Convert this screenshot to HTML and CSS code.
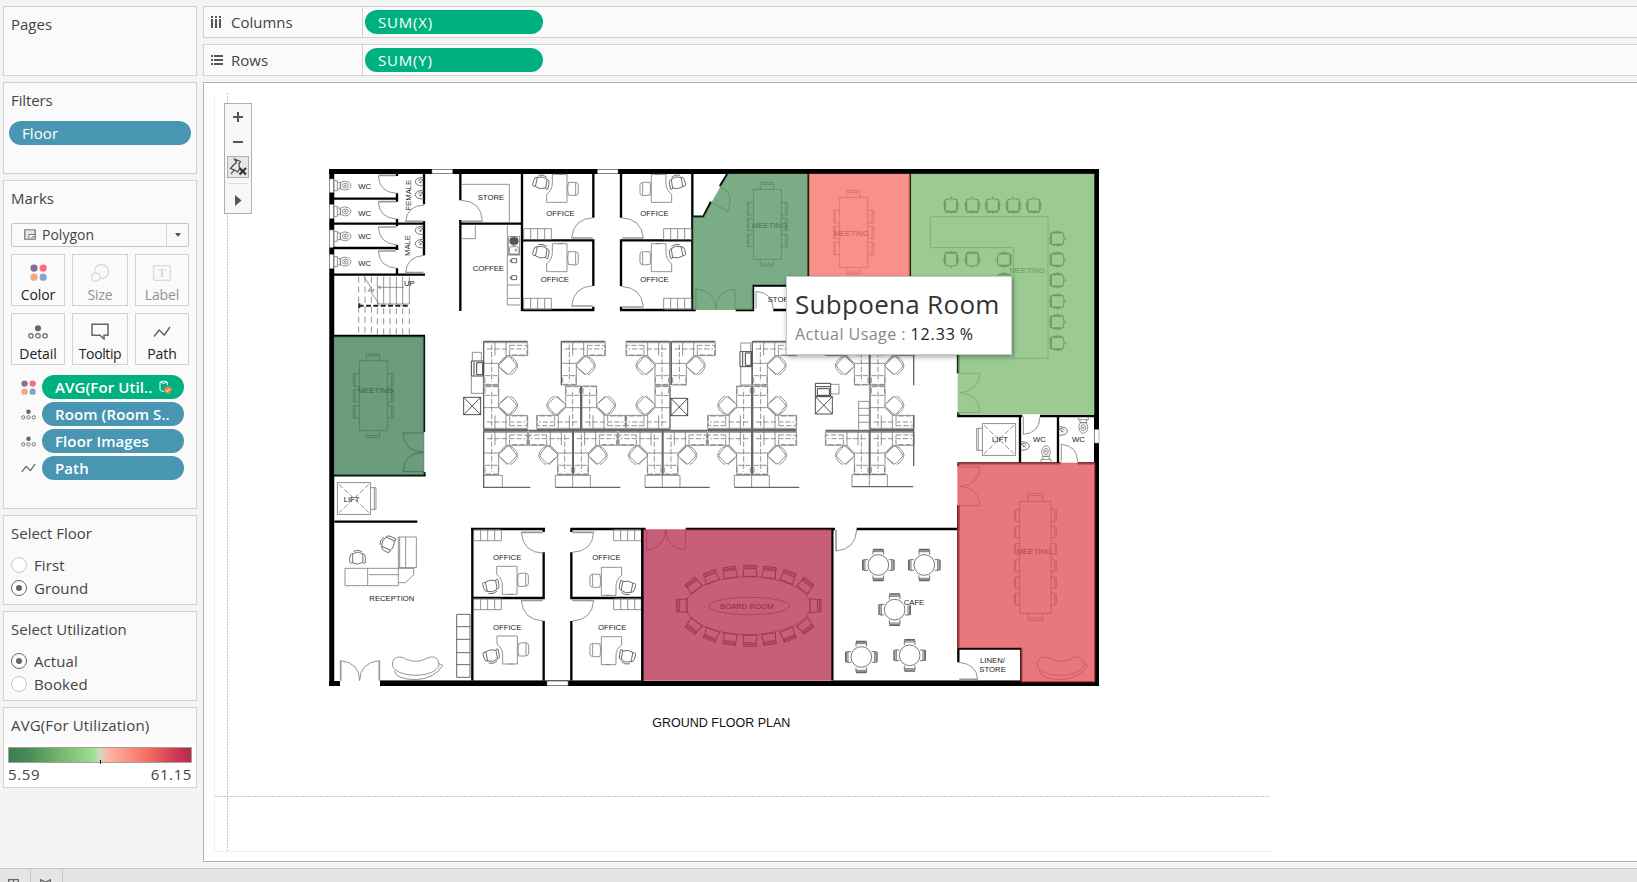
FILE: index.html
```html
<!DOCTYPE html>
<html lang="en">
<head>
<meta charset="utf-8">
<title>Floor utilization</title>
<link rel="stylesheet" href="styles.css">
</head>
<body>
<svg class="defs" width="0" height="0" aria-hidden="true">
  <defs>
    <linearGradient id="usage-ramp">
      <stop offset="0" stop-color="#3c7b54"/><stop offset=".1" stop-color="#458b56"/><stop offset=".28" stop-color="#76b56c"/>
      <stop offset=".46" stop-color="#9edc92"/><stop offset=".5" stop-color="#d2d6c2"/><stop offset=".55" stop-color="#ffb2a5"/>
      <stop offset=".76" stop-color="#f46f62"/><stop offset=".9" stop-color="#d33b54"/><stop offset="1" stop-color="#b52a4b"/>
    </linearGradient>
    <symbol id="i-color" viewBox="0 0 16 16"><circle cx="3.8" cy="3.8" r="3.4" fill="#85709b"/><circle cx="12.4" cy="3.8" r="3.4" fill="#fa6c82"/><circle cx="3.8" cy="12.4" r="3.4" fill="#f6a877"/><circle cx="12.4" cy="12.4" r="3.4" fill="#82a5cd"/></symbol>
    <symbol id="i-detail" viewBox="0 0 20 14"><circle cx="10" cy="3.2" r="3" fill="#666"/><g fill="none" stroke="#666" stroke-width="1.2"><circle cx="3" cy="10.8" r="2.2"/><circle cx="10" cy="10.8" r="2.2"/><circle cx="17" cy="10.8" r="2.2"/></g></symbol>
    <symbol id="i-path" viewBox="0 0 18 12"><path d="M1 10.5 6.2 4 11.3 9 17 1" fill="none" stroke="#666" stroke-width="1.5"/></symbol>

    <g id="desk">
      <path d="M697 73H741V157H680V133Q697 120 697 100Z M716 73h12"/>
      <path d="M745 97H765Q775 98 775 105V129Q775 136 765 137L745 135Q741 117 745 97Z M767 99V136"/>
      <use href="#armchair" transform="translate(664 98) rotate(12)"/>
    </g>
    <g id="armchair" stroke="#555">
      <path d="M-15 -13Q0 -22 15 -13L16 13Q0 22 -15 15Z"/>
      <path d="M-15 -14Q-24 -12 -24 0V13Q-20 18 -15 13 M15 -14Q24 -12 23 0V15Q19 19 16 13 M-13 -20Q0 -27 13 -19"/>
    </g>
    <g id="files"><path d="M0 0H83V33H0ZM21 0V33M42 0V33M63 0V33"/></g>
    <g id="wcpan"><path d="M0 -15H9V15H0M9 -10H18V10H9"/><path d="M18 -9Q30 -17 42 -11Q50 -6 50 0Q50 6 42 11Q30 17 18 9Z"/><ellipse cx="33" cy="0" rx="9" ry="7"/><circle cx="33" cy="0" r="2.5"/></g>
    <g id="basin" stroke="#555"><path d="M15 -13Q-12 -13 -12 0Q-12 13 15 13M-4 -2Q2 -12 12 -6M0 3 12 -6"/><circle cx="4" cy="2" r="1.5"/></g>
    <g id="cubicle">
      <path class="pane" d="M0 0H132M0 0V131"/>
      <path d="M0 4H132V43H67L45 66V131H0M67 0V43M34 0V43M0 66H45"/>
      <path class="dash" d="M10 23H125M24 10V122M78 12H130V41H78ZM4 103H44V129H4Z"/>
      <g transform="translate(74 73)"><path d="M-28 -3 -5 -25Q0 -30 6 -25L23 -4Q26 0 22 5L4 24Q0 28 -5 23L-28 3Q-30 0 -28 -3Z"/><path d="M5 -27Q25 -20 28 1Q24 18 6 28M-24 -8-4 -29M-24 8-3 28"/></g>
    </g>
    <g id="table6">
      <path d="M220 118H304V328H220ZM241 118V98H281V118M245 103H277M241 328V348H281V328M245 342H277"/>
      <path d="M220 157H202V195H220M220 205H202V242H220M220 253H202V290H220M207 157V195M207 205V242M207 253V290M304 157H322V195H304M304 205H322V242H304M304 253H322V290H304M317 157V195M317 205V242M317 253V290"/>
    </g>
    <g id="seat" stroke="#444" stroke-width="3.2"><path d="M-17 -16Q0 -22 17 -16V19H-17ZM-20 -12V15M20 -12V15M-25 0H-18M18 0H25M0 -26V-18M0 19V26M-17 22H17"/></g>
    <g id="boardchair" stroke="#555" stroke-width="2.8"><path d="M-21 17 -18 -6H18L21 17ZM-19 -6V-16H19V-6M-19 -11H19"/></g>
    <g id="cafeset" stroke="#555">
      <circle r="31"/>
      <g id="cafechairs"><path d="M-16 -31V-44H16V-31M-16 -40H16M-16 31V44H16V31M-16 40H16M-31 -16H-44V16H-31M-40 -16V16M31 -16H44V16H31M40 -16V16"/><path class="pane" d="M-16 -47H16M-16 47H16M-47 -16V16M47 -16V16"/></g>
    </g>
    <g id="sofa"><path d="M217 495C217 466 245 468 257 477Q287 491 317 477C335 465 357 470 357 495C345 537 225 535 217 495Z"/><path d="M223 512Q225 538 290 539Q345 535 368 496L357 491"/></g>
    <g id="lift"><rect width="100" height="95"/><path class="dash" d="M5 5 95 90M95 5 5 90"/></g>
  </defs>
</svg>

<div class="app">
  <aside class="sidebar">
    <section class="card pages"><h2>Pages</h2></section>
    <section class="card filters"><h2>Filters</h2><div class="pill blue">Floor</div></section>
    <section class="card marks">
      <h2>Marks</h2>
      <div class="select">
        <svg width="12" height="12" viewBox="0 0 12 12"><path d="M.75 .75h10.5v9.5H.75z" fill="#e4e4e4" stroke="#777" stroke-width="1.2"/><path d="M5 10V5.5h6M8 10V8h3" fill="#fff" stroke="#777"/></svg>
        <span>Polygon</span><i class="arrow"></i>
      </div>
      <div class="buttons">
        <div class="btn"><svg width="17" height="17"><use href="#i-color"/></svg><span>Color</span></div>
        <div class="btn off"><svg width="18" height="18" viewBox="0 0 18 18" fill="none" stroke="#d9d9d9" stroke-width="1.3"><circle cx="10.5" cy="7.5" r="7"/><circle cx="4.8" cy="13" r="4.2" fill="#fafafa"/></svg><span>Size</span></div>
        <div class="btn off"><svg width="18" height="18" viewBox="0 0 18 18"><rect x=".7" y="1.7" width="16.6" height="14.6" rx="1" fill="none" stroke="#d9d9d9" stroke-width="1.3"/><text x="9" y="13" text-anchor="middle" class="serif-t">T</text></svg><span>Label</span></div>
        <div class="btn"><svg width="20" height="14"><use href="#i-detail"/></svg><span>Detail</span></div>
        <div class="btn"><svg width="18" height="17" viewBox="0 0 18 17"><path d="M1 1.2h16v11H13V16L9 12.2H1z" fill="none" stroke="#666" stroke-width="1.5"/></svg><span class="tight">Tooltip</span></div>
        <div class="btn"><svg width="18" height="12"><use href="#i-path"/></svg><span>Path</span></div>
      </div>
      <ul class="encodings">
        <li><svg width="15" height="15"><use href="#i-color"/></svg><div class="pill green">AVG(For Util..<svg class="db" width="13" height="14" viewBox="0 0 13 14"><path d="M8.5 5V2.2Q5 -.2 1 2.2V10Q2 11.5 5 11.3M1 2.2Q4 4.5 8.5 2.2" fill="none" stroke="#fff"/><circle cx="9" cy="10" r="3.7" fill="#d9874a"/><path d="M7 10l1.5 1.5L11 8.6" fill="none" stroke="#fff"/></svg></div></li>
        <li><svg width="15" height="11"><use href="#i-detail"/></svg><div class="pill blue">Room (Room S..</div></li>
        <li><svg width="15" height="11"><use href="#i-detail"/></svg><div class="pill blue">Floor Images</div></li>
        <li><svg width="15" height="10"><use href="#i-path"/></svg><div class="pill blue">Path</div></li>
      </ul>
    </section>
    <section class="card radios"><h2>Select Floor</h2><div class="options"><label><i class="radio"></i>First</label><label><i class="radio on"></i>Ground</label></div></section>
    <section class="card radios"><h2>Select Utilization</h2><div class="options"><label><i class="radio on"></i>Actual</label><label><i class="radio"></i>Booked</label></div></section>
    <section class="card legend">
      <h2>AVG(For Utilization)</h2>
      <div class="scale">
        <svg width="184" height="17" viewBox="0 0 184 17"><rect x=".5" y=".5" width="183" height="15" fill="url(#usage-ramp)" stroke="#a8a096"/><path d="M92.5 13v4" stroke="#000"/></svg>
        <div class="ends"><span>5.59</span><span>61.15</span></div>
      </div>
    </section>
  </aside>

  <main class="work">
    <div class="shelf"><div class="name"><svg width="12" height="13" viewBox="0 0 12 13" fill="#555"><path d="M0 0h2v2H0zM4 0h2v2H4zM8 0h2v2H8zM0 3h2v9H0zM4 3h2v9H4zM8 3h2v9H8z"/></svg>Columns</div><div class="pill green">SUM(X)</div></div>
    <div class="shelf"><div class="name"><svg width="12" height="13" viewBox="0 0 12 13" fill="#555"><path d="M0 1h2v2H0zM0 5h2v2H0zM0 9h2v2H0zM3 1h9v2H3zM3 5h9v2H3zM3 9h9v2H3z"/></svg>Rows</div><div class="pill green">SUM(Y)</div></div>

    <div class="canvas">
      <svg class="plan" width="1433" height="778" viewBox="204 83 1433 778">
        <path d="M214.500 93V851.500H1271" fill="none" stroke="#f0f0f0"/>
        <path d="M227.500 93V851M215 796.500H1269" fill="none" stroke="#c4c4c4" stroke-dasharray="2 1"/>

        <!-- outer walls and windows -->
        <path d="M329 171.500H1099M331.750 169V686M329 683.500H340M380 683.500H1099M1096.500 169V686" fill="none" stroke="#000" stroke-width="5"/>
        <g fill="#fff" stroke="#888" stroke-width=".6"><path d="M432 169.500h20.500v4H432zM597.500 169.500H618v4h-20.500zM547 681h21v4.500h-21zM1094.500 429.500h4.500v13.500h-4.500zM329.500 179h4v13.500h-4zM329.500 204.500h4v14h-4zM329.500 230h4v17.500h-4zM329.500 254.500h4v14h-4z"/></g>

        <!-- north-west wing -->
        <g class="wing" transform="translate(320 150) scale(.33333)">
          <path class="wall" d="M40 146H233M40 221H315M40 294H235M40 374H315M231 71V78M231 130V155M231 207V229M231 285V300M231 355V373M312 71V163M312 213V316M421 71V151M421 210V483M421 221H605M606 71V483M606 271H822M606 480H823M820 71V203M820 268V408M820 470V480M903 71V203M903 268V408M903 470V480M903 271H1115M900 480H1127M1117 71V480"/>
          <g class="leaf"><path d="M175 76H228M175 155H228M175 231H228M175 303H228M257 214H310M257 368H310M425 214H487M755 264H818M755 468H818M907 264H970M907 471H970"/></g>
          <path d="M175 78Q178 128 231 130M175 155Q178 205 231 207M175 231Q178 281 231 285M175 303Q178 352 231 355M257 214Q260 168 312 165M257 368Q260 320 312 316M424 151Q484 154 487 212M755 264Q760 206 820 203M755 468Q760 410 820 407M903 203Q965 206 970 264M903 409Q965 412 970 470"/>
          <use href="#wcpan" transform="translate(43 107)"/><use href="#wcpan" transform="translate(43 184)"/><use href="#wcpan" transform="translate(43 259)"/><use href="#wcpan" transform="translate(43 335)"/>
          <use href="#basin" transform="translate(298 95)"/><use href="#basin" transform="translate(298 134)"/><use href="#basin" transform="translate(298 241)"/><use href="#basin" transform="translate(298 281)"/>
          <path d="M425 103H568V218M425 266H466V226M562 226V465H600M562 405H600M562 445H600M562 315H600"/>
          <rect x="566" y="260" width="33" height="54"/><circle cx="582" cy="273" r="13" fill="#777"/><path d="M570 267H594M570 273H594M570 279H594" stroke="#222"/><rect x="568" y="290" width="29" height="22" rx="7"/><circle cx="588" cy="300" r="3"/>
          <path d="M575 326H590V338H575ZM571 329V335H575M575 377H590V389H575ZM571 380V386H575" stroke="#444"/>
          <use href="#desk"/><use href="#desk" transform="translate(0 208)"/><use href="#desk" transform="translate(1735 0) scale(-1 1)"/><use href="#desk" transform="translate(1735 208) scale(-1 1)"/>
          <use href="#files" transform="translate(611 236)"/><use href="#files" transform="translate(611 445)"/><use href="#files" transform="translate(1031 236)"/><use href="#files" transform="translate(1031 445)"/>
          <path d="M172 380V462H268M191 380V462M210 380V462M229 380V462M248 380V462M268 380V462M175 412H252M182 407 174 412 182 417M130 376 152 412 145 424 162 418 155 430 178 462"/>
          <path class="dash stairs" d="M116 380V557M135 380V557M154 380V557M172 475V557M191 475V557M210 475V557M229 475V557M248 475V557M268 475V557"/>
          <path d="M116 467H268M118 460V474" stroke="#222" stroke-width="6" stroke-dasharray="15 7"/>
          <text x="115" y="117">WC</text><text x="115" y="197">WC</text><text x="115" y="267">WC</text><text x="115" y="348">WC</text>
          <text transform="translate(273 182) rotate(-90)">FEMALE</text><text transform="translate(271 318) rotate(-90)">MALE</text>
          <text x="252" y="409">UP</text><text x="473" y="150">STORE</text><text x="458" y="363">COFFEE</text>
          <text x="679" y="197">OFFICE</text><text x="662" y="397">OFFICE</text><text x="961" y="197">OFFICE</text><text x="961" y="397">OFFICE</text>
        </g>

        <!-- north-east meeting rooms -->
        <g class="wing" transform="translate(680 150) scale(.33333)">
          <path class="wall" d="M38 200H70L93 155M120 108 143 71M219 483V407H384M167 480H222M280 480H400M385 71V410M690 71V410M834 613V670"/>
          <path d="M228 424V476M228 424Q278 428 280 478"/>
          <path d="M118 110Q165 125 143 184L92 155M48 475V417Q104 420 107 476Q110 420 165 417V475"/>
          <use href="#table6"/><use href="#table6" transform="translate(259 24)"/>
          <path d="M751 200H1104V625H1001V293H751Z"/>
          <use href="#seat" transform="translate(813 165)"/><use href="#seat" transform="translate(877 165)"/><use href="#seat" transform="translate(938 165)"/><use href="#seat" transform="translate(1000 165)"/><use href="#seat" transform="translate(1061 165)"/>
          <use href="#seat" transform="translate(813 329) scale(1 -1)"/><use href="#seat" transform="translate(877 329) scale(1 -1)"/><use href="#seat" transform="translate(971 329) rotate(-90)"/><use href="#seat" transform="translate(971 391) rotate(-90)"/>
          <g transform="translate(1133 266)"><use href="#seat" transform="rotate(90)"/><use href="#seat" transform="translate(0 63) rotate(90)"/><use href="#seat" transform="translate(0 125) rotate(90)"/><use href="#seat" transform="translate(0 188) rotate(90)"/><use href="#seat" transform="translate(0 250) rotate(90)"/><use href="#seat" transform="translate(0 313) rotate(90)"/></g>
          <text x="216" y="234">MEETING</text><text x="461" y="259">MEETING</text><text x="989" y="370">MEETING</text><text x="263" y="457">STORE</text>
        </g>

        <!-- open-plan desks, west half -->
        <g class="wing" transform="translate(320 320) scale(.33333)">
          <path class="wall" d="M40 48H315M312 48V336M40 466H317M313 456V468M43 605H292"/>
          <use href="#table6" transform="translate(-102 4)"/><text x="114" y="219">MEETING</text>
          <path d="M310 339H249Q252 395 310 397Q252 399 249 455H310" stroke="#444"/>
          <use href="#lift" transform="translate(52 488)"/><path d="M152 503H168V568H152M163 503V568"/><text x="71" y="545">LIFT</text>
          <use href="#cubicle" transform="translate(491 64)"/><use href="#cubicle" transform="translate(724 64)"/><use href="#cubicle" transform="translate(1050 64) scale(-1 1)"/>
          <use href="#cubicle" transform="translate(491 329) scale(1 -1)"/><use href="#cubicle" transform="translate(782 329) scale(-1 -1)"/><use href="#cubicle" transform="translate(785 329) scale(1 -1)"/><use href="#cubicle" transform="translate(1050 329) scale(-1 -1)"/>
          <use href="#cubicle" transform="translate(491 333)"/><use href="#cubicle" transform="translate(758 333) scale(-1 1)"/><use href="#cubicle" transform="translate(760 333)"/><use href="#cubicle" transform="translate(1027 333) scale(-1 1)"/>
          <path d="M491 466H547V501M706 501V466H811V501M758 466V501M975 501V466H1080V501M1027 466V501"/>
          <path class="pane" d="M491 331H1429M491 464V502H631M706 502H901M975 502H1169M1517 331H1782"/>
          <path d="M431 232H482V284H431ZL482 284M482 232 431 284" stroke="#222"/>
          <path d="M457 123V97H484V123M454 168V220H490V168"/><path d="M454 123H490V168H454ZM462 125V166M470 128H488V164H470Z" stroke="#444" stroke-width="3"/>
        </g>

        <!-- open-plan desks, east half, and lift lobby -->
        <g class="wing" transform="translate(640 320) scale(.33333)">
          <use href="#cubicle" transform="translate(94 64)"/><use href="#cubicle" transform="translate(337 64)"/><use href="#cubicle" transform="translate(688 64) scale(-1 1)"/><use href="#cubicle" transform="translate(690 64)"/>
          <use href="#cubicle" transform="translate(335 329) scale(-1 -1)"/><use href="#cubicle" transform="translate(338 329) scale(1 -1)"/><use href="#cubicle" transform="translate(690 329) scale(1 -1)"/>
          <use href="#cubicle" transform="translate(69 333)"/><use href="#cubicle" transform="translate(335 333) scale(-1 1)"/><use href="#cubicle" transform="translate(338 333)"/><use href="#cubicle" transform="translate(688 333) scale(-1 1)"/><use href="#cubicle" transform="translate(690 333)"/>
          <path d="M283 501V466H388V501M335 466V501M636 501V464H742V501M688 464V501"/>
          <path class="pane" d="M283 502H478M636 500H820M821 100V196M821 285V438"/>
          <path d="M93 235H143V287H93ZL143 287M143 235 93 287M526 230H577V282H526ZL577 282M577 230 526 282" stroke="#222"/>
          <path d="M302 95V69H332V95M302 140V195H335V140M572 193H597V222H572M656 328V244H688V328M656 265H688M656 286H688M656 307H688"/><path d="M300 95H335V140H300ZM308 97V138M316 99H333V136H316ZM526 190H572V228H526ZM528 200H570M532 206H568V226H532Z" stroke="#444" stroke-width="3"/>
          <path class="wall" d="M955 100V160M955 276V292M953 288H1147M1200 288H1365M953 430H1262M1313 430H1365M1140 288V430M1254 288V430M955 428V439M955 557V628"/>
          <use href="#lift" transform="translate(1027 311)"/><path d="M1027 325H1010V391H1027M1015 325V391"/>
          <path d="M1150 290V343Q1198 340 1200 290M1264 425V373Q1312 377 1313 425"/>
          <use href="#basin" transform="translate(1156 378) scale(-1 1)"/><use href="#basin" transform="translate(1270 333) scale(-1 1)"/><use href="#wcpan" transform="translate(1218 427) rotate(-90)"/><use href="#wcpan" transform="translate(1330 290) rotate(90)"/>
          <path d="M955 160H1020Q1015 215 960 218Q1015 221 1020 277H955M955 441H1020Q1015 496 960 499Q1015 502 1020 557H955"/>
          <text x="1056" y="365">LIFT</text><text x="1179" y="365">WC</text><text x="1296" y="365">WC</text>
        </g>

        <!-- south-west wing -->
        <g class="wing" transform="translate(320 500) scale(.33333)">
          <path class="wall" d="M453 87H675M751 87H977M457 87V542M671 87V96M754 87V96M671 157V298M671 363V542M754 157V298M754 363V542M457 294H673M751 294H970M968 87V542"/>
          <path d="M180 542H970" stroke="#222"/>
          <g class="leaf"><path d="M604 97H668M604 301H668M757 97H821M757 301H821M62 482V542M178 482V542"/></g>
          <path d="M604 97Q608 157 671 160M604 301Q608 360 671 363M821 97Q817 154 757 157M821 301Q817 360 757 363M62 482Q118 488 119 542Q120 488 178 482"/>
          <use href="#files" transform="translate(461 89)"/><use href="#files" transform="translate(461 296)"/><use href="#files" transform="translate(881 89)"/><use href="#files" transform="translate(881 296)"/>
          <use href="#desk" transform="translate(-150 356) scale(1 -1)"/><use href="#desk" transform="translate(1585 359) scale(-1 -1)"/><use href="#desk" transform="translate(-149 565) scale(1 -1)"/><use href="#desk" transform="translate(1585 567) scale(-1 -1)"/>
          <use href="#armchair" transform="translate(204 131) rotate(-65)"/><use href="#armchair" transform="translate(113 174)"/>
          <path d="M235 111H289V203H235ZM257 111V203M239 111V203M75 205H281V224L257 248H235M75 205V257H235V205M143 205V257M147 224H235"/>
          <path d="M410 343H450V532H410ZM410 380H450M410 418H450M410 458H450M410 494H450" stroke="#444"/>
          <use href="#sofa"/>
          <text x="519" y="179">OFFICE</text><text x="817" y="179">OFFICE</text><text x="519" y="389">OFFICE</text><text x="834" y="389">OFFICE</text><text x="148" y="304">RECEPTION</text>
        </g>

        <!-- south-east wing -->
        <g class="wing" transform="translate(640 500) scale(.33333)">
          <path class="wall" d="M7 87V542M137 87H585M650 87H953M577 87V542M955 16V487M953 446H1145M1144 446V546"/>
          <path d="M580 542H1145" stroke="#222"/>
          <g class="leaf"><path d="M588 90V153M958 538H1013"/></g>
          <path d="M588 153Q647 148 650 90M957 487Q1010 492 1013 538M20 90V150Q74 146 77 90Q80 146 136 150V90"/>
          <ellipse cx="324" cy="317" rx="188" ry="87"/><ellipse cx="328" cy="318" rx="121" ry="26"/>
          <g id="board-north"><use href="#boardchair" transform="translate(160 256) rotate(-38)"/><use href="#boardchair" transform="translate(213 230) rotate(-22)"/><use href="#boardchair" transform="translate(270 217) rotate(-8)"/><use href="#boardchair" transform="translate(330 212)"/><use href="#boardchair" transform="translate(388 217) rotate(8)"/><use href="#boardchair" transform="translate(445 230) rotate(22)"/><use href="#boardchair" transform="translate(497 256) rotate(38)"/></g>
          <use href="#board-north" transform="translate(0 635) scale(1 -1)"/>
          <use href="#boardchair" transform="translate(125 317) rotate(-90)"/><use href="#boardchair" transform="translate(527 317) rotate(90)"/>
          <use href="#cafeset" transform="translate(715 195)"/><use href="#cafeset" transform="translate(853 195)"/><use href="#cafeset" transform="translate(764 329)"/><use href="#cafeset" transform="translate(664 471)"/><use href="#cafeset" transform="translate(809 466)"/>
          <path d="M1139 4H1233V340H1139ZM1164 4V-20H1208V4M1168 -13H1204M1164 340V361H1208V340M1168 354H1204"/>
          <g id="long-side"><path d="M1139 28H1127V64H1139M1139 79H1127V113H1139M1139 130H1127V164H1139M1139 180H1127V214H1139M1139 231H1127V265H1139M1139 280H1127V315H1139M1123 30V62M1123 81V111M1123 132V162M1123 182V212M1123 233V263M1123 282V313"/></g>
          <use href="#long-side" transform="translate(2372 0) scale(-1 1)"/>
          <use href="#sofa" transform="translate(975 0)"/>
          <rect x="790" y="296" width="64" height="20" fill="#fff" stroke="none"/>
          <text x="240" y="327">BOARD ROOM</text><text x="791" y="314">CAFE</text><text x="1130" y="162">MEETING</text><text x="1020" y="488">LINEN/</text><text x="1018" y="515">STORE</text>
          <text class="caption" x="37" y="682">GROUND FLOOR PLAN</text>
        </g>

        <!-- room shading by utilization -->
        <g fill-opacity=".75" stroke-opacity=".6" stroke-width=".7">
          <path d="M334.300 336.700H424V475H334.300Z" fill="#3b7a53" stroke="#3b7a53"/>
          <path d="M727.700 173.700H807.700V285H753V310H692.700V216.700H703.300Z" fill="#4e925e"/>
          <path d="M808.700 173.700H910V285H808.700Z" fill="#f46c62"/>
          <path d="M910.700 173.700H1094.500V414.300H957.700V287H910.700Z" fill="#7aba6f"/>
          <path d="M957.700 463H1095V682H1021.300V647.700H957.700Z" fill="#e04b52" stroke="#e04b52"/>
          <path d="M643.300 529.300H831.300V680.700H643.300Z" fill="#b6294c"/>
        </g>
      </svg>

      <div class="zoombar">
        <svg width="26" height="109" viewBox="0 0 26 109">
          <path d="M8 13H18M13 8V18M8 38H18" stroke="#555" stroke-width="2" fill="none"/>
          <rect x="2.500" y="52.500" width="21" height="21" fill="#e6e6e6" stroke="#b0b0b0"/>
          <path d="M9.500 55 15.500 57.500 14 60 14.500 65 12.500 68 9.500 66 5.500 64.500 9 60.500 11.500 58.500ZM9 66 6 70" fill="none" stroke="#444" stroke-width="1.200"/>
          <path d="M14.500 64 21 70.500M21 64 14.500 70.500" stroke="#333" stroke-width="2.200"/>
          <path d="M3 79.500H23" stroke="#ddd"/><path d="M10 91 16.500 96.500 10 102Z" fill="#555"/>
        </svg>
      </div>

      <div class="tooltip"><div class="room">Subpoena Room</div><div class="usage"><span>Actual Usage :</span> <b>12.33 %</b></div></div>
    </div>
  </main>
</div>
<footer class="tabs">
  <div class="tab"><svg width="11" height="10" viewBox="0 0 11 10"><path d="M.7 .7h9.600v9H.7zM5.500 0v10M0 5h11" fill="none" stroke="#666" stroke-width="1.300"/></svg></div>
  <div class="tab"><svg width="11" height="10" viewBox="0 0 11 10"><path d="M.7 10V.8L5.500 3 10.300 .8V10" fill="none" stroke="#666" stroke-width="1.300"/></svg></div>
</footer>
</body>
</html>
```
FILE: styles.css
```css
* { box-sizing: border-box; }
body {
  margin: 0;
  width: 1637px;
  height: 882px;
  overflow: hidden;
  background: #f4f4f4;
  color: #444;
  font: 15px/20px "Open Sans", "Noto Sans", sans-serif;
}
svg { display: block; flex: none; }
.defs { position: absolute; }

.app { display: flex; gap: 6px; height: 868px; padding: 6px 0 6px 3px; }

/* sidebar */
.sidebar { display: flex; flex-direction: column; gap: 6px; width: 194px; flex: none; }
.card { border: 1px solid #d2d2d2; background: #fafafa; padding: 7px 7px 0; }
.card h2 { margin: 0; font-size: 15px; font-weight: 400; }
.pages { height: 70px; }
.filters { height: 92px; padding: 7px 5px 0; }
.filters h2 { padding-left: 2px; letter-spacing: -.1px; }
.marks { height: 329px; }
.radios { height: 90px; }
.legend { height: 81px; padding: 7px 0 0; }
.legend h2 { padding-left: 7px; letter-spacing: .15px; }

.pill {
  display: flex;
  align-items: center;
  height: 24px;
  border-radius: 12px;
  padding: 0 0 1px 13px;
  color: #fff;
  font-weight: 600;
  font-size: 15px;
  white-space: nowrap;
}
.blue { background: #4996b2; }
.green { background: #00b180; }
.filters .pill { margin-top: 11px; font-weight: 500; letter-spacing: .1px; }

.select { display: flex; align-items: center; width: 178px; height: 24px; margin-top: 15px; border: 1px solid #c4c4c4; border-radius: 2px; padding-left: 12px; font-size: 14px; }
.select span { padding-left: 6px; flex: 1; }
.arrow { display: grid; place-items: center; width: 22px; height: 22px; border-left: 1px solid #d4d4d4; }
.arrow::after { content: ""; border: 3.5px solid transparent; border-top: 4px solid #555; border-bottom: 0; }

.buttons { display: grid; grid-template-columns: 54px 56px 54px; gap: 7px; margin-top: 7px; }
.btn { display: flex; flex-direction: column; align-items: center; justify-content: space-between; height: 52px; border: 1px solid #d2d2d2; padding: 5px 0 0; font-size: 14px; letter-spacing: -.1px; color: #222; }
.btn svg { margin: auto; }
.btn.off { color: #929292; }
.btn .tight { letter-spacing: -.4px; }
.serif-t { font: bold 12px "Liberation Serif", serif; fill: #d9d9d9; }

.encodings { list-style: none; margin: 10px 0 0; padding: 0 0 0 10px; display: flex; flex-direction: column; gap: 3px; }
.encodings li { display: flex; align-items: center; gap: 6px; }
.encodings .pill { width: 142px; letter-spacing: .1px; }
.db { margin-left: 7px; }

.options { display: flex; flex-direction: column; gap: 3px; margin-top: 12px; }
.options label { display: flex; align-items: center; height: 20px; gap: 7px; letter-spacing: .1px; }
.radio { width: 16px; height: 16px; border: 1px solid #c8c8c8; border-radius: 50%; background: #fff; display: grid; place-items: center; }
.radio.on { border-color: #666; }
.radio.on::after { content: ""; width: 6px; height: 6px; border-radius: 50%; background: #666; }

.scale { background: #fff; margin-top: 8px; height: 44px; padding: 4px 4px 0; }
.ends { display: flex; justify-content: space-between; letter-spacing: .6px; }

/* shelves */
.work { flex: 1; display: flex; flex-direction: column; gap: 6px; min-width: 0; }
.shelf { display: flex; align-items: center; height: 32px; border: 1px solid #d2d2d2; border-right: 0; background: #fafafa; }
.name { display: flex; align-items: center; gap: 8px; width: 159px; height: 30px; padding-left: 7px; border-right: 1px solid #d2d2d2; }
.shelf .pill { width: 178px; margin-left: 2px; font-weight: 500; letter-spacing: .8px; }

/* view */
.canvas { position: relative; height: 780px; border: 1px solid #b0b0b0; border-right: 0; background: #fff; }
.wing { fill: none; stroke: #777; stroke-width: 2.4; }
.wing .wall { stroke: #000; stroke-width: 7; }
.wing .leaf { stroke: #999; stroke-width: 5; }
.pane { stroke: #666; stroke-width: 4; }
.dash { stroke-dasharray: 16 6; }
.dash.stairs { stroke-dasharray: 18 12; }
.wing text { fill: #222; stroke: none; font: 23.2px "Liberation Sans", sans-serif; }
.wing .caption { font-size: 37.5px; fill: #111; }

.zoombar { position: absolute; left: 20px; top: 20px; width: 28px; height: 111px; border: 1px solid #b0b0b0; background: #f7f7f7; }
.tooltip { position: absolute; left: 582px; top: 193px; width: 226px; height: 79px; padding: 10px 0 0 8px; border: 1px solid #c8c8c8; background: #fff; box-shadow: 1px 2px 5px rgba(0,0,0,.35); white-space: nowrap; }
.room { font-size: 26px; line-height: 34px; letter-spacing: .3px; color: #333; }
.usage { font-size: 16px; line-height: 26px; color: #888; letter-spacing: .45px; }
.usage b { font-weight: 500; color: #222; letter-spacing: .9px; word-spacing: -1px; }

.tabs { display: flex; height: 14px; border-top: 1px solid #c6c6c6; background: #e5e5e5; overflow: hidden; }
.tab { width: 32px; border-right: 1px solid #c6c6c6; padding: 10px 0 0 9px; }
.tab:first-child { width: 31px; padding-left: 8px; }
```
